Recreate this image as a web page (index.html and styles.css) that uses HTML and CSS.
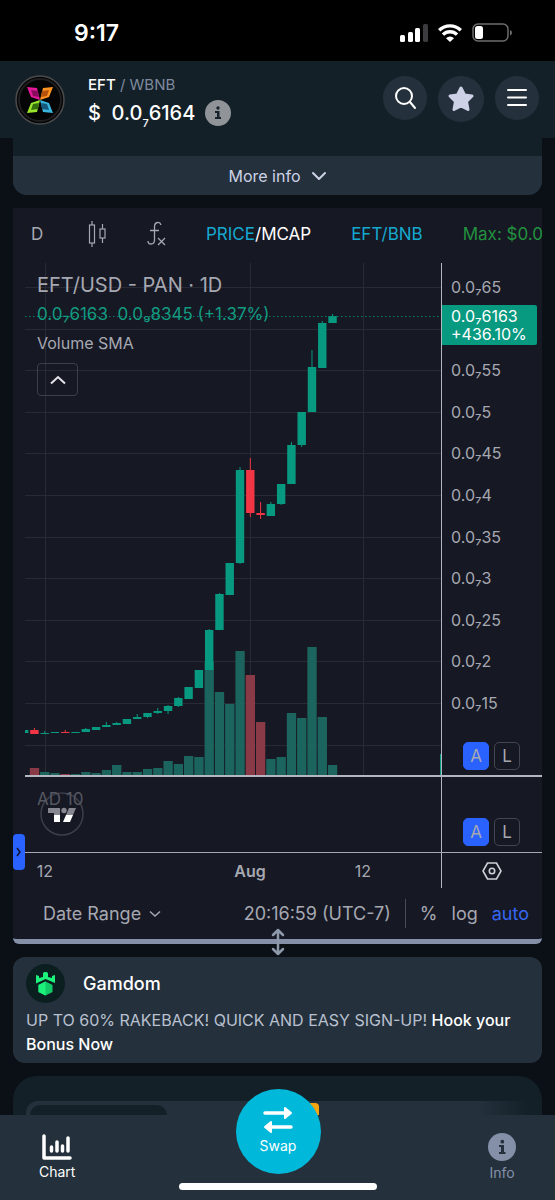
FILE: index.html
```html
<!DOCTYPE html>
<html lang="en">
<head>
    <meta charset="UTF-8" />
    <meta name="viewport" content="width=device-width, initial-scale=1.0" />
    <title>EFT / WBNB</title>
    <link rel="stylesheet" href="styles.css">
</head>
<body>
    <div class="status-bar">
        <span class="clock">9:17</span>
        <div class="status-icons">
            <svg width="28" height="18" viewBox="0 0 28 18" fill="#fff">
                <rect x="0" y="11" width="5" height="7" rx="1.5" />
                <rect x="8" y="8" width="5" height="10" rx="1.5" />
                <rect x="15" y="4" width="5" height="14" rx="1.5" />
                <rect x="23" y="0" width="5" height="18" rx="1.5" fill="#3c3c3e" />
            </svg>
            <svg width="24" height="18" viewBox="0 0 24 18" fill="none" stroke="#fff" stroke-width="3.4">
                <path d="M1.2 6.3a15.5 15.5 0 0 1 21.6 0" />
                <path d="M5 10.6a10 10 0 0 1 14 0" />
                <path d="M8 14.2a5.7 5.7 0 0 1 8 0L12 18z" fill="#fff" stroke="none" />
            </svg>
            <svg width="41" height="20" viewBox="0 0 41 20">
                <rect x="1" y="1" width="35" height="17" rx="5" fill="none" stroke="#6d6d6f" stroke-width="1.5" />
                <rect x="3" y="3" width="8" height="13" rx="2.5" fill="#fff" />
                <path d="M38 7q2 .5 2 2.7t-2 2.8z" fill="#6d6d6f" />
            </svg>
        </div>
    </div>

    <header class="header">
        <svg class="token-logo" viewBox="0 0 50 50">
            <circle cx="25" cy="25" r="24" fill="#050506" stroke="#4b4b4d" stroke-width="1.5" />
            <circle cx="25" cy="25" r="21" fill="none" stroke="#1e1e20" stroke-width="2" />
            <path d="M12 12l10 1 3 12-9-3z" fill="#e5189b" />
            <path d="M16 15l7 1 1 6-6-1z" fill="#8a0c5d" />
            <path d="M38 12l-10 1-3 12 9-3z" fill="#ff9420" />
            <path d="M34 15l-7 1-1 6 6-1z" fill="#b4510d" />
            <path d="M12 38l10-1 3-12-9 3z" fill="#9be52a" />
            <path d="M16 35l7-1 1-6-6 1z" fill="#35700f" />
            <path d="M38 38l-10-1-3-12 9 3z" fill="#38b6dd" />
            <path d="M34 35l-7-1-1-6 6 1z" fill="#14597b" />
        </svg>
        <div class="token">
            <div class="pair"><b>EFT</b> / WBNB</div>
            <div class="price">
                <span>$&nbsp; 0.0<sub>7</sub>6164</span>
                <svg width="26" height="26" viewBox="0 0 26 26">
                    <circle cx="13" cy="13" r="13" fill="#909498" />
                    <path d="M10 11h4.5v6H16v2h-6v-2h2v-4h-2z" fill="#17232c" />
                    <circle cx="13" cy="8" r="1.7" fill="#17232c" />
                </svg>
            </div>
        </div>
        <div class="actions">
            <button class="round" aria-label="Search">
                <svg width="24" height="24" viewBox="0 0 24 24" fill="none" stroke="#fff" stroke-width="2" stroke-linecap="round">
                    <circle cx="11" cy="10" r="8" />
                    <path d="M17 16l5 6" />
                </svg>
            </button>
            <button class="round star" aria-label="Favorite">
                <svg width="28" height="28" viewBox="0 0 28 28" fill="#cdd1e6" stroke="#cdd1e6" stroke-width="3" stroke-linejoin="round">
                    <path d="M14 3l3.5 7 7.500 1-5.500 5.500 1.500 8L14 21l-7 3.500 1.500-8L3 11l7.500-1z" />
                </svg>
            </button>
            <button class="round" aria-label="Menu">
                <svg width="20" height="20" viewBox="0 0 20 20" stroke="#fff" stroke-width="2" stroke-linecap="round">
                    <path d="M1 2h18M1 9.5h18M1 17h18" />
                </svg>
            </button>
        </div>
    </header>

    <main class="content">
        <section class="info-card">
            <button class="more">
                More info
                <svg width="16" height="10" viewBox="0 0 16 10" fill="none" stroke="#cdd1e6" stroke-width="2" stroke-linecap="round" stroke-linejoin="round">
                    <path d="M2 2l6 6 6-6" />
                </svg>
            </button>
        </section>

        <section class="widget">
            <div class="toolbar">
                <button class="interval">D</button>
                <button aria-label="Candles">
                    <svg width="19" height="28" viewBox="0 0 19 28" fill="none" stroke="#a6a8b1" stroke-width="1.2">
                        <path d="M4 1v4M4 23v4M14.500 4v5M14.500 18v5" />
                        <rect x="1.500" y="5" width="5" height="18" />
                        <rect x="12" y="9" width="5" height="9" />
                    </svg>
                </button>
                <button aria-label="Indicators">
                    <svg width="19" height="26" viewBox="0 0 19 26" fill="none" stroke="#a6a8b1" stroke-width="1.3">
                        <path d="M14 4q-1-3-3.500-2.500Q7.500 2 7.500 6v13q0 4-3.500 4-3 0-3-3M3 9.500h9M11 17l7 7M18 17l-7 7" />
                    </svg>
                </button>
                <button><span class="cyan">PRICE</span><span class="white">/MCAP</span></button>
                <button class="cyan">EFT/BNB</button>
                <span class="max">Max: $0.0</span>
            </div>

            <div class="chart">
                <div class="pane main-pane">
                    <svg class="plot" id="plot" viewBox="0 0 416 512" preserveAspectRatio="none"></svg>
                    <div class="legend">
                        <div class="symbol">EFT/USD - PAN · 1D</div>
                        <div class="values">0.0₇6163&nbsp; 0.0₉8345 (+1.37%)</div>
                        <div class="study">Volume SMA</div>
                        <button class="collapse" aria-label="Collapse">
                            <svg width="18" height="12" viewBox="0 0 18 12" fill="none" stroke="#e3e4ea" stroke-width="2">
                                <path d="M2 9.5l7-6.500 7 6.500" />
                            </svg>
                        </button>
                    </div>
                </div>
                <div class="axis main-axis">
                    <ul class="scale">
                        <li>0.0₇65</li>
                        <li></li>
                        <li>0.0₇55</li>
                        <li>0.0₇5</li>
                        <li>0.0₇45</li>
                        <li>0.0₇4</li>
                        <li>0.0₇35</li>
                        <li>0.0₇3</li>
                        <li>0.0₇25</li>
                        <li>0.0₇2</li>
                        <li>0.0₇15</li>
                    </ul>
                    <div class="last-price">0.0₇6163<br>+436.10%</div>
                    <div class="modes">
                        <button class="on">A</button>
                        <button>L</button>
                    </div>
                </div>

                <div class="pane sub-pane">
                    <span class="study-name">AD 10</span>
                    <svg class="tv-logo" width="44" height="44" viewBox="0 0 44 44">
                        <circle cx="22" cy="22" r="21" fill="none" stroke="#3c3e49" stroke-width="1.5" />
                        <path d="M8 16h12v7h-6v-2H8z" fill="#85868f" />
                        <circle cx="24" cy="18.5" r="2.7" fill="#85868f" />
                        <path d="M29 16h7l-3 7h-7z" fill="#85868f" />
                        <path d="M14 23h6v7h-6zM26 23h7l-3 7h-7z" fill="#fff" />
                    </svg>
                </div>
                <div class="axis sub-axis">
                    <div class="modes">
                        <button class="on">A</button>
                        <button>L</button>
                    </div>
                </div>

                <div class="times">
                    <span class="t1">12</span>
                    <span class="t2">Aug</span>
                    <span class="t3">12</span>
                </div>
                <div class="axis corner">
                    <svg width="20" height="18" viewBox="0 0 20 18" fill="none" stroke="#cfd1d8" stroke-width="1.6">
                        <path d="M5.5 1h9L19 9l-4.500 8h-9L1 9z" />
                        <circle cx="10" cy="9" r="2.7" />
                    </svg>
                </div>
                <button class="drawer" aria-label="Show tools">
                    <svg width="6" height="10" viewBox="0 0 6 10" fill="none" stroke="#10132a" stroke-width="1.5">
                        <path d="M1 1l3 4-3 4" />
                    </svg>
                </button>
            </div>

            <div class="bottom-bar">
                <button class="range">
                    Date Range
                    <svg width="12" height="8" viewBox="0 0 12 8" fill="none" stroke="#a6a8b1" stroke-width="1.5">
                        <path d="M1 1.5l5 4.500 5-4.500" />
                    </svg>
                </button>
                <button class="zone">20:16:59 (UTC-7)</button>
                <span class="divider"></span>
                <button>%</button>
                <button>log</button>
                <button class="auto">auto</button>
            </div>
            <svg class="resizer" width="14" height="28" viewBox="0 0 14 28" fill="none" stroke="#8d98ab" stroke-width="2.5" stroke-linecap="round" stroke-linejoin="round">
                <path d="M7 2v24M2 7l5-5 5 5M2 21l5 5 5-5" />
            </svg>
        </section>

        <section class="promo">
            <div class="promo-head">
                <svg width="39" height="39" viewBox="0 0 39 39">
                    <circle cx="19.5" cy="19.5" r="19.5" fill="#0b1f21" />
                    <path d="M10 11l3 1v2l4-1V9l1.500-1h2L22 9v4l4 1v-2l3-1v8l-9.500-4L10 19.500z" fill="#1cf27b" />
                    <path d="M19.5 17.500l7 3.500v7l-7 3.500-7-3.500v-7z" fill="#12c968" />
                    <path d="M19.5 17.500v14l-7-3.500v-7z" fill="#1cf27b" />
                </svg>
                <span>Gamdom</span>
            </div>
            <p>UP TO 60% RAKEBACK! QUICK AND EASY SIGN-UP! <a href="#">Hook your Bonus Now</a></p>
        </section>

        <section class="trades">
            <div class="tabs">
                <span class="tab"></span>
                <span class="badge"></span>
            </div>
        </section>
    </main>

    <nav class="nav">
        <a href="#" class="nav-item">
            <svg width="30" height="26" viewBox="0 0 30 26" fill="none" stroke="#fff" stroke-width="3.5" stroke-linecap="round" stroke-linejoin="round">
                <path d="M2 2v22h26" />
                <path d="M9.5 13v4M15 8v9M20.500 12v5M26 4v13" />
            </svg>
            Chart
        </a>
        <a href="#" class="swap">
            <svg width="32" height="28" viewBox="0 0 32 28" fill="#fff" stroke="#fff" stroke-width="3.5" stroke-linecap="round" stroke-linejoin="round">
                <path d="M3 7h22M29 21H7" />
                <path d="M23 2l6 5-6 5zM9 16l-6 5 6 5z" stroke-width="2" />
            </svg>
            Swap
        </a>
        <a href="#" class="nav-item info">
            <svg width="28" height="28" viewBox="0 0 28 28">
                <circle cx="14" cy="14" r="14" fill="#8490a8" />
                <path d="M11 12h5v7h1.500v2H11v-2h2v-5h-2z" fill="#24313c" />
                <circle cx="14.3" cy="8.7" r="1.9" fill="#24313c" />
            </svg>
            Info
        </a>
        <span class="home-bar"></span>
    </nav>

    <script src="script.js"></script>
</body>
</html>
```

FILE: styles.css
```css
* {
    box-sizing: border-box;
}

body {
    margin: 0;
    min-height: 100vh;
    background: #0a1016;
    color: #fff;
    font-family: Inter, "Liberation Sans", sans-serif;
    font-size: 16px;
}

button {
    display: flex;
    align-items: center;
    justify-content: center;
    padding: 0;
    border: 0;
    background: none;
    color: inherit;
    font: inherit;
}

a {
    color: inherit;
    text-decoration: none;
}

svg {
    display: block;
    flex-shrink: 0;
}

/* Phone status bar */
.status-bar {
    display: flex;
    align-items: center;
    justify-content: space-between;
    height: 61px;
    padding: 5px 42px 0 74px;
    background: #000;
}

.clock {
    font-size: 23px;
    font-weight: 600;
}

.status-icons {
    display: flex;
    align-items: center;
    gap: 10px;
}

/* Header */
.header {
    display: flex;
    align-items: flex-start;
    height: 77px;
    padding: 14px 16px 0 15px;
    background: #132028;
}

.token-logo {
    width: 50px;
    height: 50px;
}

.token {
    flex: 1;
    margin-left: 23px;
}

.pair {
    color: #7f8a9f;
    font-size: 15px;
    line-height: 20px;
}

.pair b {
    color: #fff;
    font-weight: 500;
}

.price {
    display: flex;
    align-items: center;
    gap: 10px;
    font-size: 20px;
    font-weight: 500;
    line-height: 36px;
}

.price sub {
    font-size: 11px;
    line-height: 0;
    vertical-align: -7px;
}

.actions {
    display: flex;
    gap: 11px;
    margin-top: 1px;
}

.round {
    width: 44px;
    height: 44px;
    border-radius: 50%;
    background: #24313c;
}

.star {
    width: 46px;
    height: 46px;
}

.content {
    padding: 0 13px;
}

/* Info card */
.info-card {
    padding-top: 18px;
    border-radius: 0 0 14px 14px;
    background: #132028;
}

.more {
    width: 100%;
    height: 39px;
    gap: 10px;
    border-radius: 0 0 14px 14px;
    background: #24313c;
    color: #cdd1e6;
}

/* Chart widget */
.widget {
    position: relative;
    margin-top: 13px;
    border-bottom: 5px solid #868fa8;
    border-radius: 0 0 6px 6px;
    background: #161824;
    color: #a6a8b1;
}

.toolbar {
    display: flex;
    align-items: center;
    gap: 40px;
    height: 55px;
    padding: 0 0 4px 18px;
    overflow: hidden;
    font-size: 17px;
    white-space: nowrap;
}

.toolbar > * {
    flex-shrink: 0;
}

.interval {
    width: 17px;
    justify-content: flex-start;
}

.cyan {
    color: #14a9cf;
}

.white {
    color: #fff;
}

.max {
    color: #23923f;
}

.chart {
    position: relative;
    display: grid;
    grid-template-columns: minmax(0, 1fr) 101px;
    margin-left: 12px;
}

.pane {
    position: relative;
}

.main-pane,
.main-axis {
    height: 514px;
    border-bottom: 2px solid #b4b7c0;
}

.sub-pane,
.sub-axis {
    height: 76px;
    border-bottom: 1px solid #a6a8b1;
}

.plot {
    width: 100%;
    height: 512px;
}

.axis {
    position: relative;
    border-left: 1px solid #b4b7c0;
}

.legend {
    position: absolute;
    top: 8px;
    left: 12px;
}

.symbol {
    font-size: 20px;
    line-height: 28px;
}

.values {
    color: #129b80;
    font-size: 17px;
    line-height: 30px;
}

.study {
    line-height: 28px;
}

.collapse {
    width: 41px;
    height: 33px;
    margin-top: 6px;
    border: 1px solid #3c3e49;
    border-radius: 4px;
}

.scale {
    display: flex;
    flex-direction: column;
    justify-content: space-between;
    height: 452px;
    margin: 0;
    padding: 12px 0 0 9px;
    list-style: none;
}

.scale li {
    height: 24px;
    line-height: 24px;
}

.last-price {
    position: absolute;
    top: 42px;
    left: 0;
    width: 95px;
    height: 40px;
    padding: 2px 0 2px 9px;
    border-radius: 0 2px 2px 0;
    background: #089981;
    color: #fff;
    line-height: 18px;
}

.modes {
    display: flex;
    gap: 5px;
    justify-content: flex-end;
    padding-right: 22px;
}

.main-axis .modes {
    margin-top: 27px;
}

.sub-axis .modes {
    margin-top: 41px;
}

.modes button {
    width: 26px;
    height: 28px;
    border: 1px solid #44464f;
    border-radius: 5px;
    font-size: 17px;
}

.modes .on {
    border-color: #2962ff;
    background: #2962ff;
}

.study-name {
    position: absolute;
    top: 12px;
    left: 12px;
    color: #555761;
    font-size: 17px;
}

.tv-logo {
    margin: 15px 0 0 15px;
}

.times {
    display: grid;
    grid-template-columns: 40fr 129fr 112fr 114fr 21fr;
    height: 35px;
    line-height: 36px;
    text-align: center;
}

.t1 {
    grid-column: 1;
}

.t2 {
    grid-column: 3;
    font-weight: 600;
}

.t3 {
    grid-column: 4;
}

.corner {
    display: flex;
    align-items: center;
    justify-content: center;
}

.drawer {
    position: absolute;
    bottom: 18px;
    left: -12px;
    width: 12px;
    height: 36px;
    border-radius: 4px;
    background: #2962ff;
}

.bottom-bar {
    display: flex;
    align-items: center;
    gap: 14px;
    height: 51px;
    padding: 0 13px 0 30px;
    font-size: 18px;
}

.range {
    gap: 8px;
    margin-right: auto;
}

.divider {
    width: 1px;
    height: 29px;
    background: #4a4c56;
}

.auto {
    color: #3567f0;
}

.resizer {
    position: absolute;
    bottom: -17px;
    left: calc(50% - 7px);
}

/* Promo */
.promo {
    height: 106px;
    margin-top: 13px;
    padding: 7px 13px 0;
    border-radius: 12px;
    background: #24313c;
}

.promo-head {
    display: flex;
    align-items: center;
    gap: 18px;
    font-size: 18px;
    font-weight: 500;
}

.promo p {
    margin: 5px 0 0;
    color: #b9c0d0;
    line-height: 24px;
}

.promo a {
    color: #fff;
    font-weight: 500;
}

/* Trades card, mostly under the nav */
.trades {
    height: 100px;
    margin-top: 13px;
    padding: 25px 13px 0;
    border-radius: 24px 24px 0 0;
    background: #132028;
}

.tabs {
    display: flex;
    height: 50px;
    padding: 4px 4px 0;
    border-radius: 12px 0 0 0;
    background: linear-gradient(to right, #24313c 90%, #132028);
}

.tab {
    width: 137px;
    height: 40px;
    border-radius: 10px;
    background: #132028;
}

.badge {
    width: 24px;
    height: 20px;
    margin: -2px 0 0 128px;
    border-radius: 4px;
    background: #f5a40c;
}

/* Bottom navigation */
.nav {
    position: fixed;
    right: 0;
    bottom: 0;
    left: 0;
    display: flex;
    justify-content: space-between;
    height: 85px;
    padding: 0 39px;
    background: #24313c;
    font-size: 14px;
}

.nav-item {
    display: flex;
    flex-direction: column;
    align-items: center;
    gap: 3px;
    margin-top: 19px;
    line-height: 18px;
}

.info {
    margin-top: 18px;
    color: #8490a8;
}

.swap {
    position: absolute;
    top: -26px;
    left: calc(50% - 42px);
    display: flex;
    flex-direction: column;
    align-items: center;
    gap: 3px;
    width: 85px;
    height: 85px;
    padding-top: 17px;
    border-radius: 50%;
    background: #00b8d9;
    line-height: 18px;
}

.home-bar {
    position: absolute;
    bottom: 10px;
    left: calc(50% - 99px);
    width: 198px;
    height: 7px;
    border-radius: 4px;
    background: #fff;
}
```

FILE: script.js
```js
const plot = document.getElementById('plot');

// [high, top, bottom, low, volume top, red]
const candles = [
    [467, 467, 470, 470, 512],
    [465, 467, 471, 471, 505, 1],
    [468, 470, 471, 471, 509],
    [469, 469, 470, 470, 510],
    [467, 469, 470, 470, 511, 1],
    [469, 469, 470, 470, 511],
    [465, 466, 469, 469, 509],
    [464, 464, 467, 467, 510],
    [459, 462, 464, 464, 507],
    [459, 460, 462, 462, 502],
    [456, 456, 461, 461, 509],
    [451, 454, 456, 456, 509],
    [450, 450, 454, 455, 506],
    [445, 448, 450, 451, 505],
    [442, 443, 448, 451, 498],
    [434, 435, 443, 444, 501],
    [424, 424, 436, 436, 493],
    [407, 407, 425, 425, 494],
    [366, 367, 407, 407, 399],
    [330, 331, 367, 367, 429],
    [300, 300, 332, 332, 441],
    [204, 207, 300, 301, 388],
    [195, 207, 250, 254, 412, 1],
    [239, 250, 252, 256, 459, 1],
    [239, 241, 253, 253, 496],
    [221, 221, 241, 242, 494],
    [179, 182, 221, 221, 450],
    [149, 149, 182, 184, 455],
    [87, 104, 149, 149, 384],
    [58, 60, 105, 105, 454],
    [51, 53, 60, 60, 502]
];

let shapes = '';

function rect(x, y, w, h, fill) {
    shapes += `<rect x="${x}" y="${y}" width="${w}" height="${h}" fill="${fill}" />`;
}

// Grid
for (let i = 0; i < 12; i++) {
    rect(0, Math.round(24 + i * 41.6), 416, 1, '#282a35');
}
[20, 225, 338].forEach(x => rect(x, 0, 1, 512, '#282a35'));

// Volume first so the candles lie over it
candles.forEach(([high, top, bottom, low, vol, red], i) => {
    const x = 19.7 + (i - 2) * 10.28;
    rect(x - 4.6, vol, 9.3, 512 - vol, red ? '#8a3946' : '#1c655e');
});
candles.forEach(([high, top, bottom, low, vol, red], i) => {
    const x = 19.7 + (i - 2) * 10.28;
    const color = red ? '#f23645' : '#089981';
    rect(x - 4.2, top, 8.4, bottom - top, color);
    rect(x - 0.5, high, 1, low - high, color);
});

// Last price
shapes += '<path d="M0 53.5H416" stroke="#0c7d6c" stroke-dasharray="1.5 2.5" />';
rect(415, 491, 1, 21, '#089981');

plot.innerHTML = shapes;
```
